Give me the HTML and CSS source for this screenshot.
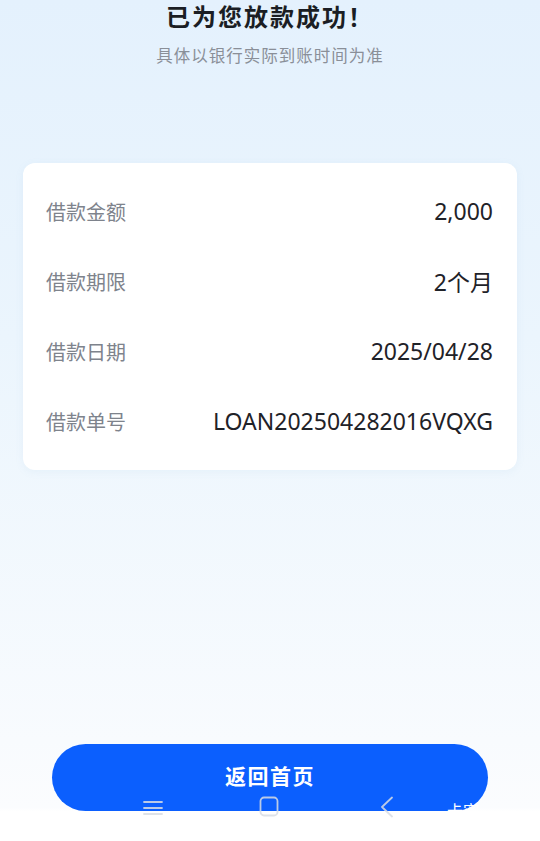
FILE: index.html
```html
<!DOCTYPE html>
<html>

<head>
    <meta charset="utf-8">
    <title>放款成功</title>
    <link rel="stylesheet" href="styles.css">
</head>

<body>
    <div class="page">
        <h1 class="title">已为您放款成功！</h1>
        <p class="subtitle">具体以银行实际到账时间为准</p>

        <div class="card">
            <div class="row">
                <span class="label">借款金额</span>
                <span class="value">2,000</span>
            </div>
            <div class="row">
                <span class="label">借款期限</span>
                <span class="value">2个月</span>
            </div>
            <div class="row">
                <span class="label">借款日期</span>
                <span class="value">2025/04/28</span>
            </div>
            <div class="row">
                <span class="label">借款单号</span>
                <span class="value">LOAN202504282016VQXG</span>
            </div>
        </div>

        <button class="home-btn">返回首页</button>
    </div>

    <!-- system navigation bar drawn over the page -->
    <div class="navbar">
        <span class="nav-item">
            <svg width="20" height="16" viewBox="0 0 20 16">
                <path d="M1 2h18M1 8h18M1 14h18" stroke="currentColor" stroke-width="1.8" fill="none" stroke-linecap="round" />
            </svg>
        </span>
        <span class="nav-item">
            <svg width="20" height="21" viewBox="0 0 20 21">
                <rect x="1.5" y="1.5" width="17" height="18" rx="3.5" stroke="currentColor" stroke-width="1.8" fill="none" />
            </svg>
        </span>
        <span class="nav-item">
            <svg width="14" height="22" viewBox="0 0 14 22">
                <path d="M12 1.5L2 11l10 9.5" stroke="currentColor" stroke-width="1.8" fill="none" stroke-linecap="round" stroke-linejoin="round" />
            </svg>
        </span>
        <span class="nav-text">卡密</span>
    </div>
</body>

</html>
```

FILE: styles.css
```css
html, body {
    margin: 0;
    padding: 0;
}

body {
    font-family: "Noto Sans", "Noto Sans CJK SC", sans-serif;
    background: #ffffff;
}

.page {
    min-height: 841px;
    box-sizing: border-box;
    display: flex;
    flex-direction: column;
    background: linear-gradient(180deg, #e4f1fd 0%, #ebf5fd 40%, #f8fbfe 88%, #fbfcfe 96%, #ffffff 96.5%);
    padding-bottom: 30px;
}

.title {
    margin: 0;
    text-align: center;
    font-size: 24px;
    line-height: 33px;
    font-weight: bold;
    color: #1b1e24;
    letter-spacing: 2px;
}

.subtitle {
    margin: 11px 0 0;
    text-align: center;
    font-size: 16.5px;
    line-height: 24px;
    color: #8a8f98;
    letter-spacing: 1px;
}

.card {
    margin: 95px 23px 0;
    padding: 13px 24px 14px 23px;
    background: #ffffff;
    border-radius: 12px;
    box-shadow: 0 2px 8px rgba(120, 160, 200, 0.08);
}

.row {
    height: 70px;
    display: flex;
    align-items: center;
    justify-content: space-between;
}

.label {
    font-size: 20px;
    color: #7e838c;
}

.value {
    font-size: 23px;
    color: #1f2228;
}

.home-btn {
    margin: auto 52px 0;
    height: 67px;
    border: none;
    border-radius: 34px;
    background: #0b5ffe;
    color: #ffffff;
    font-family: inherit;
    font-size: 21px;
    font-weight: bold;
    letter-spacing: 1.5px;
    padding: 0 0 5px;
}

.navbar {
    position: absolute;
    left: 0;
    top: 796px;
    width: 540px;
    height: 24px;
}

.nav-item {
    position: absolute;
    top: 0;
    color: #d9dde4;
    opacity: 0.85;
}

.nav-item:nth-child(1) {
    left: 143px;
    top: 3px;
}

.nav-item:nth-child(2) {
    left: 259px;
    top: 0;
}

.nav-item:nth-child(3) {
    left: 380px;
    top: 0;
}

.nav-text {
    position: absolute;
    left: 447px;
    top: 2px;
    font-size: 16px;
    color: #ffffff;
}
```
